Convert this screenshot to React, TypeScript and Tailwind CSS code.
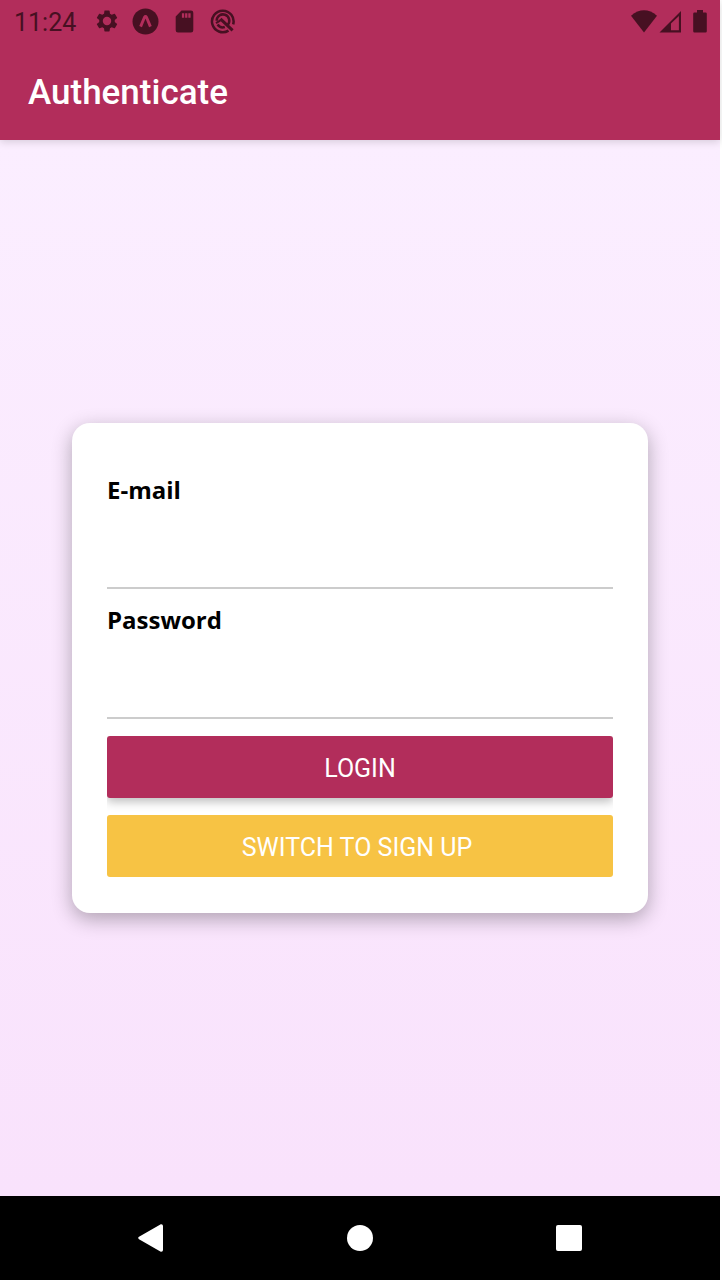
import type { ReactNode } from "react";

function StatusBar() {
  return (
    <div className="flex h-12 items-center justify-between pt-1 pl-[14px] pr-[13px] pb-[10px] text-[#471022]">
      <div className="flex items-center">
        <span className="w-20 pt-1 text-[25px] leading-8">11:24</span>
        <div className="flex items-center gap-3">
          <svg className="size-[26px]" viewBox="0 0 24 24" fill="currentColor" aria-hidden="true">
            <path d="M19.14 12.94c.04-.3.06-.61.06-.94 0-.32-.02-.64-.07-.94l2.03-1.58a.49.49 0 0 0 .12-.61l-1.92-3.32a.488.488 0 0 0-.59-.22l-2.39.96c-.5-.38-1.03-.7-1.62-.94l-.36-2.54a.484.484 0 0 0-.48-.41h-3.84c-.24 0-.43.17-.47.41l-.36 2.54c-.59.24-1.13.57-1.62.94l-2.39-.96c-.22-.08-.47 0-.59.22L2.74 8.87c-.12.21-.08.47.12.61l2.03 1.58c-.05.3-.09.63-.09.94s.02.64.07.94l-2.03 1.58a.49.49 0 0 0-.12.61l1.92 3.32c.12.22.37.29.59.22l2.39-.96c.5.38 1.03.7 1.62.94l.36 2.54c.05.24.24.41.48.41h3.84c.24 0 .44-.17.47-.41l.36-2.54c.59-.24 1.13-.56 1.62-.94l2.39.96c.22.08.47 0 .59-.22l1.92-3.32c.12-.22.07-.47-.12-.61l-2.01-1.58zM12 15.900A3.900 3.900 0 1 1 12 8.100a3.900 3.900 0 0 1 0 7.800z" />
          </svg>
          <svg className="size-[27px]" viewBox="0 0 27 27" aria-hidden="true">
            <circle cx="13.500" cy="13.500" r="13" fill="currentColor" />
            <path d="M8.600 18.600 12.500 9.300Q13.500 7.800 14.500 9.300L18.400 18.600" fill="none" stroke="#b22d5b" strokeWidth="2.900" strokeLinejoin="round" />
          </svg>
          <svg className="size-[27px]" viewBox="0 0 27 27" aria-hidden="true">
            <path d="M10.500 2.500H20a2.300 2.300 0 0 1 2.300 2.300v17.400a2.300 2.300 0 0 1-2.300 2.300H7a2.300 2.300 0 0 1-2.300-2.300V8.500z" fill="currentColor" />
            <path d="M10.900 5.200h2.300v4.500h-2.300zM14.100 5.200h2.300v4.500h-2.300zM17.300 5.200h2.300v4.500h-2.300z" fill="#b22d5b" />
          </svg>
          <svg className="size-[26px]" viewBox="0 0 26 26" fill="none" stroke="currentColor" aria-hidden="true">
            <path d="M18.500 22.600A10.800 10.800 0 1 1 23.200 16.300" strokeWidth="2.500" />
            <path d="M6.700 12.800A6.300 6.300 0 1 1 17.800 16.800M7.600 16.500A6.300 6.300 0 0 0 14.800 19" strokeWidth="2.500" />
            <path d="M10.400 10.900 22.600 22.300" strokeWidth="3" />
            <path d="M6 15.200 10.400 12.400" strokeWidth="2" />
          </svg>
        </div>
      </div>
      <div className="flex items-center">
        <svg className="h-[26px] w-7" viewBox="0 0 28 26" fill="currentColor" aria-hidden="true">
          <path d="M1 7.700Q14-3 27 7.700L14 24.500z" />
        </svg>
        <svg className="h-[26px] w-6" viewBox="0 0 24 26" aria-hidden="true">
          <path d="M1.500 24.500 23 3v21.500z" fill="currentColor" />
          <path d="M13 15.600 20.900 8v14.200H13z" fill="#b22d5b" />
        </svg>
        <svg className="ml-[11px] h-[26px] w-[14px]" viewBox="0 0 14 26" fill="currentColor" aria-hidden="true">
          <path d="M4 2h6v2.400h2.500q1.300 0 1.300 1.300v17.500q0 1.300-1.300 1.300h-11Q.2 24.500.2 23.200V5.700q0-1.300 1.300-1.300H4z" />
        </svg>
      </div>
    </div>
  );
}

function Field({ id, label, type }: { id: string; label: string; type: string }) {
  return (
    <div className="flex h-[130px] flex-col pt-[15px]">
      <label htmlFor={id} className="font-['Open_Sans',sans-serif] text-2xl leading-8 font-bold text-black">
        {label}
      </label>
      <input id={id} type={type} className="mt-auto h-16 w-full border-b-2 border-[#cccccc] bg-transparent px-1 text-2xl outline-none" />
    </div>
  );
}

function NavButton({ label, children }: { label: string; children: ReactNode }) {
  return (
    <button type="button" aria-label={label} className="flex size-12 items-center justify-center text-white">
      {children}
    </button>
  );
}

export default function App() {
  return (
    <div className="flex min-h-screen flex-col bg-white pr-[2px] pb-1 font-[Roboto,sans-serif]">
      <header className="relative bg-[#b22d5b] shadow-[0_2px_8px_rgba(0,0,0,0.15)]">
        <StatusBar />
        <h1 className="flex h-[92px] items-center px-7 pb-0.5 text-[35px] font-medium text-white">Authenticate</h1>
      </header>

      <main className="flex flex-1 flex-col items-center justify-center bg-linear-to-b from-[#fbeeff] to-[#f9e2fc]">
        <form
          className="w-4/5 rounded-[18px] bg-white px-[35px] py-9 shadow-[0_6px_20px_rgba(0,0,0,0.3)]"
          onSubmit={(event) => event.preventDefault()}
        >
          <Field id="email" label="E-mail" type="email" />
          <Field id="password" label="Password" type="password" />
          <div className="mt-[17px] flex flex-col gap-[17px] text-[25px] text-white">
            <button type="submit" className="h-[62px] rounded-[3px] bg-[#b22d5b] pt-1 shadow-[0_4px_10px_rgba(0,0,0,0.25)] [clip-path:inset(0_0_-17px_0)]">
              LOGIN
            </button>
            <button type="button" className="relative h-[62px] rounded-[3px] bg-[#f7c344] pt-1 pr-1.5">
              SWITCH TO SIGN UP
            </button>
          </div>
        </form>
      </main>

      <nav aria-label="System" className="flex h-[84px] items-center justify-around bg-black px-[46px]">
        <NavButton label="Back">
          <svg className="h-7 w-[26px]" viewBox="0 0 26 28" fill="currentColor" aria-hidden="true">
            <path d="M1 12.800 22.800.3Q25 0 25 2v24q0 2-2.200 1.700L1 15.200q-1.600-1.200 0-2.400z" />
          </svg>
        </NavButton>
        <NavButton label="Home">
          <span className="size-[26px] rounded-full bg-white" />
        </NavButton>
        <NavButton label="Overview">
          <span className="size-[26px] rounded-[2px] bg-white" />
        </NavButton>
      </nav>
    </div>
  );
}
